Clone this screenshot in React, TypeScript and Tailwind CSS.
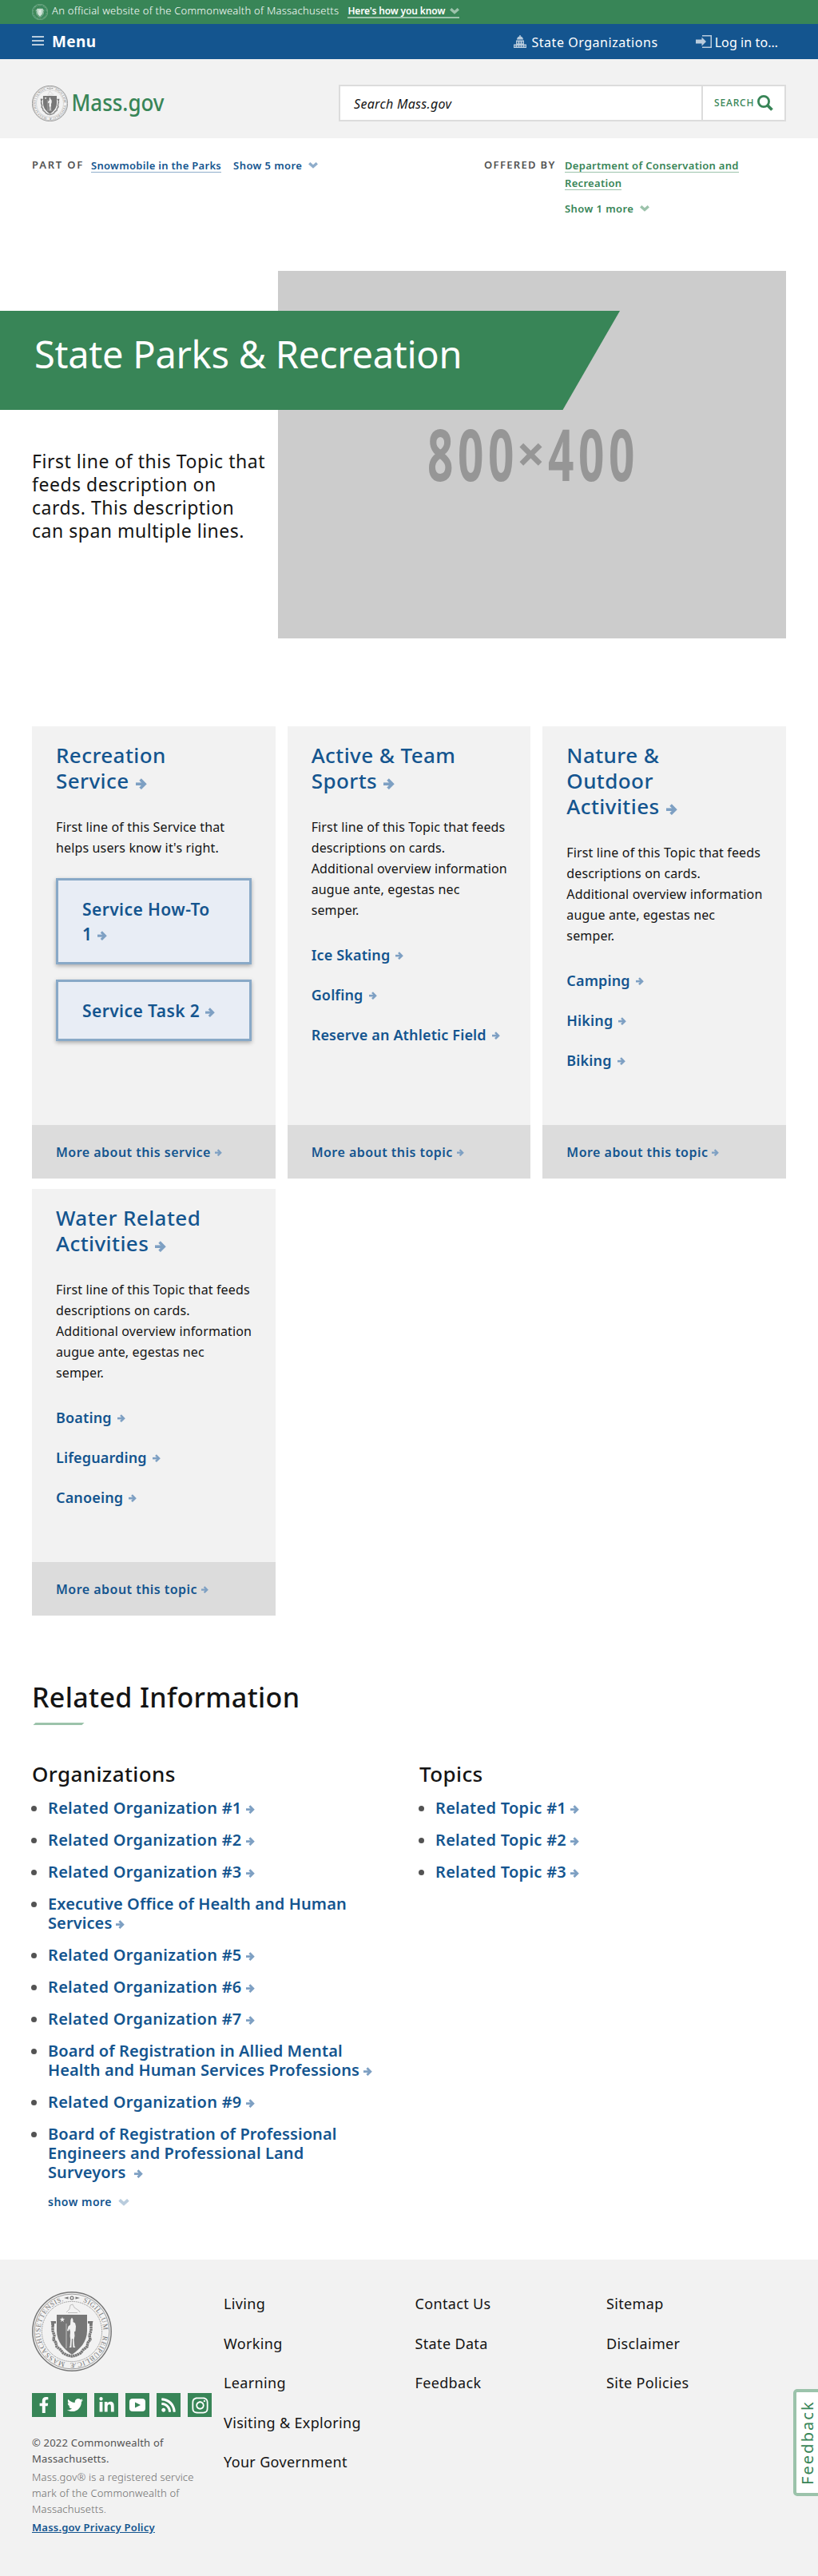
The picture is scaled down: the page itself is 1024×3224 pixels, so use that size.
import type { ReactNode } from "react";
import { FaFacebookF, FaTwitter, FaLinkedinIn, FaRss, FaInstagram } from "react-icons/fa";

function Seal({ className }: { className: string }) {
  return (
    <svg viewBox="0 0 100 100" className={className} fill="none" stroke="currentColor">
      <circle cx="50" cy="50" r="49.2" strokeWidth="1.5" />
      <circle cx="50" cy="50" r="46.9" strokeWidth="0.7" />
      <circle cx="50" cy="50" r="37.6" strokeWidth="0.9" strokeDasharray="0.9 0.8" />
      <path id="seal-ring" d="M50 10.500a39.500 39.500 0 1 1 -0.010 0" stroke="none" />
      <g fill="currentColor" stroke="none" fontFamily="Liberation Serif, serif" fontSize="8.800">
        <text><textPath href="#seal-ring" startOffset="14" textLength="46">SIGILLUM</textPath></text>
        <text><textPath href="#seal-ring" startOffset="67" textLength="59">REIPUBLICÆ</textPath></text>
        <text><textPath href="#seal-ring" startOffset="132" textLength="105">MASSACHUSETTENSIS.</textPath></text>
      </g>
      <path d="M40 8l5.500-1.600v3.200zM60 8l-5.500-1.600v3.200z" fill="currentColor" stroke="none" />
      <circle cx="50" cy="8" r="1.900" strokeWidth="1.200" />
      <path d="M43 26l4-4 1-5 3-1 2 4 6 4 1 2M45 26.500h12" strokeWidth="0.900" opacity="0.450" />
      <path d="M31 29H69V49C69 63 60 72 50 79C40 72 31 63 31 49Z" fill="currentColor" stroke="none" />
      <path d="M26 37v12l2 6-1 5 3 4 1 5 5 4 3 4 6 3 5 1 5-1 6-3 3-4 5-4 1-5 3-4-1-5 2-6V37" strokeWidth="3.400" strokeDasharray="2.400 0.500" />
      <path d="M23.500 37h6.500v3h-2v3h-3zM76.500 37H70v3h2v3h3z" fill="currentColor" stroke="none" />
      <path d="M38 31.800l.8 2.300h2.400l-1.900 1.500.7 2.300-2-1.400-2 1.400.7-2.300-1.900-1.500h2.400z" fill="#f2f2f2" stroke="none" />
      <path
        d="M48.500 35l1.500-2.500 1.500 2.500v3l2.500 1.500 1 4-.5 6-1.500 1 .5 5-1 5 .8 8 1.200 1.500h-3l-.6-11h-.9l-.6 11h-3l1.200-1.500.6-8-.6-5 .4-5-1-4-1.500 3-1.500-.5 1.500-5.500 2.500-2z"
        fill="#f2f2f2"
        stroke="none"
      />
      <path d="M43 40v31" stroke="#f2f2f2" strokeWidth="0.600" />
    </svg>
  );
}

function Arrow({ className }: { className: string }) {
  return (
    <svg viewBox="0 0 14 14" className={`inline-block text-[#7ea0c3] ${className}`} fill="none" stroke="currentColor" strokeWidth="3.600">
      <path d="M0 7.200h10" />
      <path d="M5.600 1.600L11.200 7.200L5.600 12.800" />
    </svg>
  );
}

function Chevron({ className }: { className: string }) {
  return (
    <svg viewBox="0 0 12 8" className={`inline-block ${className}`} fill="none" stroke="currentColor" strokeWidth="3.400">
      <path d="M1.200 1.200L6 5.500L10.800 1.200" />
    </svg>
  );
}

/* Link text whose trailing arrow always stays with the last word. */
function ArrowText({ text, arrow }: { text: string; arrow: string }) {
  const i = text.lastIndexOf(" ") + 1;
  return (
    <>
      {text.slice(0, i)}
      <span className="whitespace-nowrap">
        {text.slice(i)}
        <Arrow className={arrow} />
      </span>
    </>
  );
}

function Card({ title, more, children }: { title: string; more: string; children: ReactNode }) {
  return (
    <article className="flex flex-col bg-[#f2f2f2]">
      <div className="grow px-[30px] pt-5 pb-14">
        <h2 className="mb-[29px] max-w-[200px] text-[26px] leading-8 font-medium tracking-[0.42px] text-[#14558f]">
          <ArrowText text={title} arrow="ml-2 size-[14px] align-[-1px]" />
        </h2>
        {children}
      </div>
      <div className="bg-[#dcdcdc] px-[30px] pt-[2px] text-base leading-[65px] font-semibold tracking-[0.47px] text-[#14558f]">
        <ArrowText text={more} arrow="ml-[5px] size-[9px] align-[1px]" />
      </div>
    </article>
  );
}

function TopicBody({ links }: { links: string[] }) {
  return (
    <>
      <p className="-mr-1 text-base leading-[26px] tracking-[0.14px]">
        First line of this Topic that feeds
        <br />
        descriptions on cards.
        <br />
        Additional overview information
        <br />
        augue ante, egestas nec
        <br />
        semper.
      </p>
      <ul className="mt-[18px] text-lg leading-[50px] font-semibold tracking-[0.15px] whitespace-nowrap text-[#14558f]">
        {links.map((l) => (
          <li key={l}>
            <ArrowText text={l} arrow="ml-[7px] size-[10px] align-[1px]" />
          </li>
        ))}
      </ul>
    </>
  );
}

function RelatedList({ title, items, children }: { title: string; items: string[]; children?: ReactNode }) {
  return (
    <div>
      <h3 className="text-[26px] leading-9 font-medium tracking-[0.4px]">{title}</h3>
      <ul className="mt-[13px] flex flex-col gap-4 text-xl leading-6 font-semibold text-[#14558f]">
        {items.map((item) => (
          <li key={item} className="flex">
            <span className="mt-[9px] -ml-px size-[7px] shrink-0 rounded-full bg-[#535353]" />
            <span className={item.length > 30 ? "ml-[14px] tracking-[0.1px]" : "ml-[14px] tracking-[0.28px]"}>
              <ArrowText text={item} arrow="ml-[5px] size-[11px]" />
            </span>
          </li>
        ))}
      </ul>
      {children}
    </div>
  );
}

const organizations = [
  "Related Organization #1",
  "Related Organization #2",
  "Related Organization #3",
  "Executive Office of Health and Human Services",
  "Related Organization #5",
  "Related Organization #6",
  "Related Organization #7",
  "Board of Registration in Allied Mental Health and Human Services Professions",
  "Related Organization #9",
  "Board of Registration of Professional Engineers and Professional Land Surveyors\u00a0",
];

const footerNav = [
  ["Living", "Working", "Learning", "Visiting & Exploring", "Your Government"],
  ["Contact Us", "State Data", "Feedback"],
  ["Sitemap", "Disclaimer", "Site Policies"],
];

export default function App() {
  return (
    <div className="relative h-[3224px] w-[1024px] overflow-hidden bg-white font-['Noto_Sans',sans-serif] text-[#141414]">
      <div className="flex h-[30px] items-center bg-[#388557] px-10 text-white">
        <Seal className="size-5 text-[#c3dccd]" />
        <span className="-mt-[2px] ml-[5px] text-[13px] font-light tracking-[0.24px]">
          An official website of the Commonwealth of Massachusetts
        </span>
        <span className="-mt-[2px] ml-[11px] flex h-[18px] items-center border-b-2 border-[#9cc3ab] text-xs font-semibold tracking-[-0.12px]">
          <span className="mt-[2px]">Here's how you know</span>
          <Chevron className="mt-[2px] ml-[6px] h-2 w-3 text-[#9cc3ab]" />
        </span>
      </div>

      <nav className="flex h-11 items-center bg-[#14558f] pl-10 text-white">
        <span className="-mt-[2px] flex w-[15px] flex-col gap-[3px]">
          <span className="h-[2px] bg-[#b9ccdd]" />
          <span className="h-[2px] bg-[#b9ccdd]" />
          <span className="h-[2px] bg-[#b9ccdd]" />
        </span>
        <span className="ml-[10px] text-[19px] font-bold tracking-[0.4px]">Menu</span>
        <span className="ml-auto flex items-center text-base tracking-[0.54px]">
          <svg viewBox="0 0 16 16" className="mr-[6px] size-4 text-[#b9ccdd]" fill="currentColor">
            <path
              d="M7.300 0h1.400v1.400C10.800 1.900 12 3.500 12 5.500H4C4 3.500 5.200 1.900 7.300 1.400zM3 6.500h10v5h3V16H0v-4.500h3zM4.300 8v2.500h1.200V8zM7.400 8v2.500h1.200V8zM10.500 8v2.500h1.200V8zM1.200 13v1.400h1.400V13zM4.300 13v1.400h1.400V13zM7.300 13v1.400h1.400V13zM10.300 13v1.400h1.400V13zM13.400 13v1.400h1.400V13z"
              fillRule="evenodd"
            />
          </svg>
          <span className="mt-[2px]">State Organizations</span>
        </span>
        <span className="mr-[50px] ml-[47px] flex items-center text-base tracking-[0.1px]">
          <svg viewBox="0 0 20 16" className="mr-1 h-4 w-5 text-[#b9ccdd]" fill="currentColor">
            <path d="M8 0h12v16H8v-1.500H18.500V1.500H8zM0 5.500h7.500V2.500L13 8l-5.500 5.500v-3H0z" />
          </svg>
          <span className="mt-[2px]">Log in to…</span>
        </span>
      </nav>

      <header className="flex h-[99px] items-start justify-between bg-[#f2f2f2] px-10 pt-8">
        <div className="mt-px flex text-[#777]">
          <Seal className="size-[45px]" />
          <svg className="ml-1 h-[45px] w-[124px] overflow-visible">
            <text x="0.5" y="32" textLength="116" lengthAdjust="spacingAndGlyphs" fill="#388557" fontSize="28" fontWeight="500" fontFamily="Noto Sans">
              Mass.gov
            </text>
          </svg>
        </div>
        <div className="flex h-[46px] w-[560px] border-2 border-[#dcdcdc] bg-white">
          <div className="grow border-r-2 border-[#dcdcdc] pt-px pl-[17px] text-base leading-[42px] tracking-[0.3px] italic">
            Search Mass.gov
          </div>
          <div className="flex w-[102px] items-center pl-[14px] text-xs font-medium tracking-[0.83px] text-[#388557]">
            SEARCH
            <svg viewBox="0 0 20 20" className="ml-1 size-5" fill="none" stroke="currentColor">
              <circle cx="8" cy="8" r="6.600" strokeWidth="2.800" />
              <path d="M12.500 12.500L18.500 18.500" strokeWidth="3.800" />
            </svg>
          </div>
        </div>
      </header>

      <div className="flex h-[166px] pt-[22px] pl-10 text-[13px] leading-[22px] font-semibold tracking-[0.3px]">
        <span className="w-[74px] tracking-[1.8px] text-[#535353]">PART OF</span>
        <span className="flex w-[492px] items-start text-[#14558f]">
          <span className="mt-px h-5 border-b border-[#8fadcb]">Snowmobile in the Parks</span>
          <span className="mt-px ml-[15px] tracking-[0.42px]">Show 5 more</span>
          <Chevron className="mt-2 ml-2 h-2 w-3 text-[#8fadcb]" />
        </span>
        <span className="w-[101px] tracking-[1.33px] text-[#535353]">OFFERED BY</span>
        <div className="mt-px flex flex-col items-start text-[#388557]">
          <span className="mb-[2px] h-5 border-b border-[#9cc3ab]">Department of Conservation and</span>
          <span className="h-5 border-b border-[#9cc3ab]">Recreation</span>
          <span className="mt-3 flex items-center tracking-[0.42px]">
            Show 1 more
            <Chevron className="ml-2 h-2 w-3 text-[#9cc3ab]" />
          </span>
        </div>
      </div>

      <section className="relative flex h-[460px]">
        <p className="w-[348px] pt-[224px] pl-10 text-[23px] leading-[29px] tracking-[0.52px] whitespace-nowrap">
          First line of this Topic that
          <br />
          feeds description on
          <br />
          cards. This description
          <br />
          can span multiple lines.
        </p>
        <div className="h-[460px] w-[636px] bg-[#cccccc]">
          <svg className="h-full w-full" fill="#969696" fontFamily="Noto Sans" fontWeight="700">
            <text transform="translate(187 263) scale(0.63 1)" fontSize="90" letterSpacing="8.800">800</text>
            <text x="298.500" y="252" fontSize="63">×</text>
            <text transform="translate(338 263) scale(0.63 1)" fontSize="90" letterSpacing="8.800">400</text>
          </svg>
        </div>
        <h1 className="absolute top-[50px] left-0 h-[124px] w-[776px] bg-[#388557] pl-[43px] text-[47px] leading-[108px] tracking-[-0.27px] text-white [clip-path:polygon(0_0,100%_0,704.5px_100%,0_100%)]">
          State Parks &amp; Recreation
        </h1>
      </section>

      <section className="mt-[110px] grid grid-cols-3 gap-x-[15px] gap-y-[13px] px-10">
        <Card title="Recreation Service" more="More about this service">
          <p className="text-base leading-[26px] tracking-[0.14px]">
            First line of this Service that
            <br />
            helps users know it's right.
          </p>
          <div className="mt-[25px] flex flex-col gap-[19px] text-[21px] leading-[31px] font-semibold tracking-[0.42px] text-[#14558f]">
            {["Service How-To 1", "Service Task 2"].map((t) => (
              <div key={t} className="border-3 border-[#89a9c7] bg-[#e8edf5] px-[30px] pt-[21px] pb-[19px] shadow-[0_2px_5px_rgba(0,0,0,0.3)]">
                <ArrowText text={t} arrow="ml-[7px] size-[12px]" />
              </div>
            ))}
          </div>
        </Card>
        <Card title="Active & Team Sports" more="More about this topic">
          <TopicBody links={["Ice Skating", "Golfing", "Reserve an Athletic Field"]} />
        </Card>
        <Card title="Nature & Outdoor Activities" more="More about this topic">
          <TopicBody links={["Camping", "Hiking", "Biking"]} />
        </Card>
        <Card title="Water Related Activities" more="More about this topic">
          <TopicBody links={["Boating", "Lifeguarding", "Canoeing"]} />
        </Card>
      </section>

      <section className="mt-20 h-[726px] px-10">
        <h2 className="text-[34px] leading-[44px] font-medium tracking-[0.35px]">Related Information</h2>
        <div className="mt-[10px] ml-[3px] h-[3px] w-[61px] -skew-x-45 bg-[#9cc3ab]" />
        <div className="mt-[43px] grid grid-cols-[440px_430px] gap-x-[45px]">
          <RelatedList title="Organizations" items={organizations}>
            <div className="mt-[15px] ml-5 flex items-center text-sm leading-5 font-semibold tracking-[0.5px] text-[#14558f]">
              show more
              <Chevron className="ml-2 h-[9px] w-[14px] text-[#b9ccdd]" />
            </div>
          </RelatedList>
          <RelatedList title="Topics" items={["Related Topic #1", "Related Topic #2", "Related Topic #3"]} />
        </div>
      </section>

      <footer className="flex h-[396px] bg-[#f2f2f2] pl-10">
        <div className="w-[240px] pt-10 text-[13px] leading-5 whitespace-nowrap">
          <Seal className="size-[100px] text-[#777]" />
          <div className="mt-[27px] flex gap-[9px] text-white">
            <span className="flex size-[30px] shrink-0 items-center justify-center bg-[#388557]"><FaFacebookF size={20} /></span>
            <span className="flex size-[30px] shrink-0 items-center justify-center bg-[#388557]"><FaTwitter size={20} /></span>
            <span className="flex size-[30px] shrink-0 items-center justify-center bg-[#388557]"><FaLinkedinIn size={21} /></span>
            <span className="flex size-[30px] shrink-0 items-center justify-center bg-[#388557]">
              <svg viewBox="0 0 20 16" className="h-4 w-5">
                <rect width="20" height="16" rx="4" fill="currentColor" />
                <path d="M7 4.500L14 8L7 11.500Z" fill="#388557" />
              </svg>
            </span>
            <span className="flex size-[30px] shrink-0 items-center justify-center bg-[#388557]"><FaRss size={20} /></span>
            <span className="flex size-[30px] shrink-0 items-center justify-center bg-[#388557]"><FaInstagram size={23} /></span>
          </div>
          <p className="mt-[22px] tracking-[0.2px] text-[#535353]">
            © 2022 Commonwealth of
            <br />
            Massachusetts.
          </p>
          <p className="mt-[3px] font-light tracking-[0.18px] text-[#6b6b6b]">
            Mass.gov® is a registered service
            <br />
            mark of the Commonwealth of
            <br />
            Massachusetts.
          </p>
          <p className="mt-[3px] font-semibold tracking-[0.23px] text-[#14558f] underline">Mass.gov Privacy Policy</p>
        </div>
        {footerNav.map((col) => (
          <ul key={col[0]} className="w-[239.500px] pt-[31px] text-lg leading-[49.500px] tracking-[0.35px]">
            {col.map((l) => (
              <li key={l}>{l}</li>
            ))}
          </ul>
        ))}
      </footer>

      <div className="absolute top-[2990px] -right-1 flex h-[134px] w-[35px] rotate-180 items-center justify-center rounded-r-[5px] border-4 border-[#9cc3ab] bg-white text-xl leading-[27px] tracking-[2.100px] text-[#388557] [writing-mode:vertical-rl]">
        Feedback
      </div>
    </div>
  );
}
